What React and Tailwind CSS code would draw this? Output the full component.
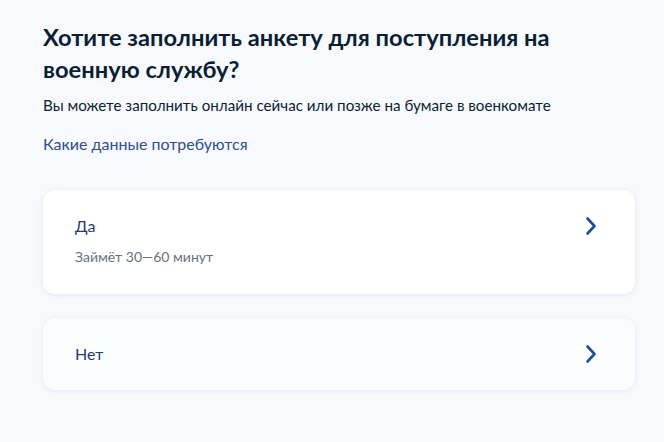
export default function App() {
  const Chevron = () => (
    <svg width="24" height="24" viewBox="0 0 24 24" fill="none" className="shrink-0">
      <path d="M8.5 4.5 L15.5 12 L8.5 19.5" stroke="#214c9c" strokeWidth="2.6" strokeLinecap="round" strokeLinejoin="round" />
    </svg>
  );
  return (
    <div className="w-[664px] h-[442px] bg-[#f8f9fc] overflow-hidden" style={{ fontFamily: "Lato, 'Noto Sans', sans-serif" }}>
      <div className="pl-[43px] pt-[21px] w-[635px]">
        <h1 className="text-[23.7px] leading-[32px] font-bold text-[#0b1f33]">
          Хотите заполнить анкету для поступления на военную службу?
        </h1>
        <p className="mt-2 text-[15.2px] leading-6 text-[#0b1f33]">
          Вы можете заполнить онлайн сейчас или позже на бумаге в военкомате
        </p>
        <div className="mt-[15px] text-[16px] leading-6 text-[#2d4f8e]">Какие данные потребуются</div>

        <div className="mt-[34px] flex flex-col gap-6">
          <div className="bg-white rounded-xl shadow-[0_1px_5px_rgba(180,195,220,0.35)] pl-8 pr-8 pt-6 pb-[27px] flex items-start justify-between">
            <div>
              <div className="text-[16px] leading-6 text-[#243d6f]">Да</div>
              <div className="mt-[9px] text-[14px] leading-5 text-[#66727f]">Займёт 30—60 минут</div>
            </div>
            <Chevron />
          </div>
          <div className="bg-[#fbfcfe] rounded-xl shadow-[0_1px_5px_rgba(180,195,220,0.3)] px-8 py-6 flex items-center justify-between">
            <div className="text-[16px] leading-6 text-[#243d6f]">Нет</div>
            <Chevron />
          </div>
        </div>
      </div>
    </div>
  );
}
